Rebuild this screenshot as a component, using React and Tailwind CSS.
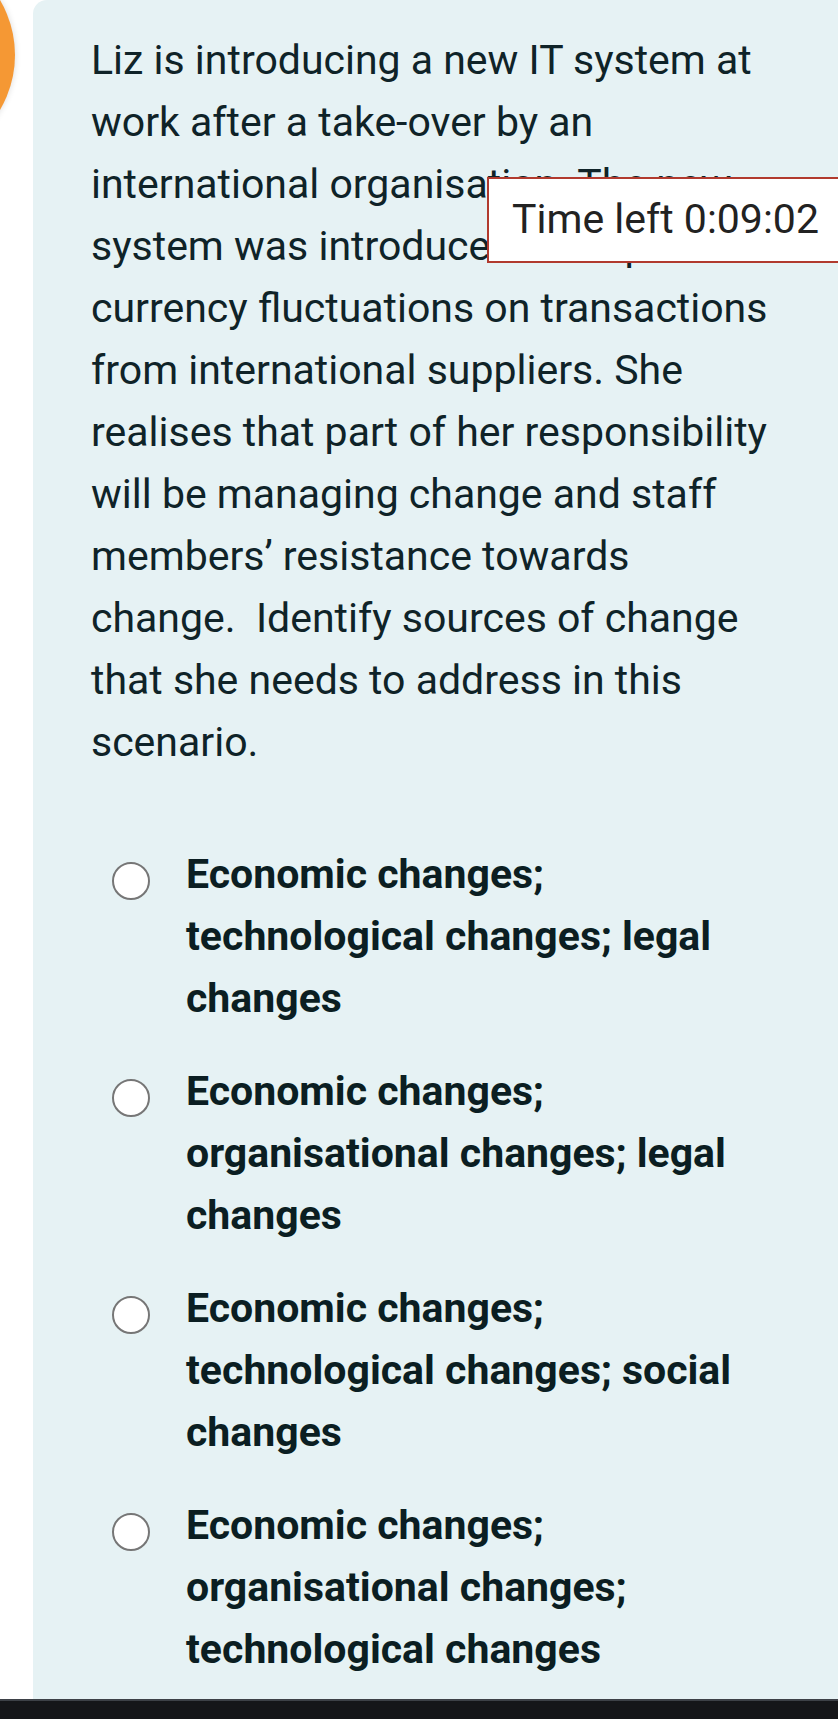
import React from 'react'

const options = [
  'Economic changes; technological changes; legal changes',
  'Economic changes; organisational changes; legal changes',
  'Economic changes; technological changes; social changes',
  'Economic changes; organisational changes; technological changes',
]

function Option({ label }) {
  return (
    <label className="flex items-start">
      <span className="ml-[21px] mt-[19px] w-[38px] h-[38px] shrink-0 rounded-full border-2 border-[#767676] bg-white" />
      <span className="ml-[36px] max-w-[584px] font-bold text-[41px] leading-[62px] text-[#0b1e22]">
        {label}
      </span>
    </label>
  )
}

export default function App() {
  return (
    <div className="relative w-[838px] h-[1719px] overflow-hidden bg-white font-['Roboto',sans-serif]">
      <div className="absolute -left-[201px] -top-[53px] w-[216px] h-[216px] rounded-full bg-[#f59834] shadow-[0_0_6px_rgba(0,0,0,0.15)]" />

      <div className="ml-[33px] h-[1699px] rounded-tl-[14px] bg-[#e6f2f4] pt-[29px] pl-[58px] pr-[48px]">
        <p className="text-[41px] leading-[62px] text-[#0f2328]">
          Liz is introducing a new IT system at work after a take-over by an
          international organisation. The new system was introduced to help
          with currency fluctuations on transactions from international
          suppliers. She realises that part of her responsibility will be
          managing change and staff members’ resistance towards change.{'\u00a0 '}
          Identify sources of change that she needs to address in this
          scenario.
        </p>

        <div className="mt-[70px] flex flex-col gap-[31px]">
          {options.map((o) => (
            <Option key={o} label={o} />
          ))}
        </div>
      </div>

      <div className="h-[20px] border-t-2 border-[#3d4147] bg-[#151619]" />

      <div className="absolute left-[487px] top-[177px] w-[370px] h-[86px] border-2 border-[#b13a2e] bg-white pl-[23px] flex items-center text-[41px] text-[#222222]">
        Time left 0:09:02
      </div>
    </div>
  )
}
